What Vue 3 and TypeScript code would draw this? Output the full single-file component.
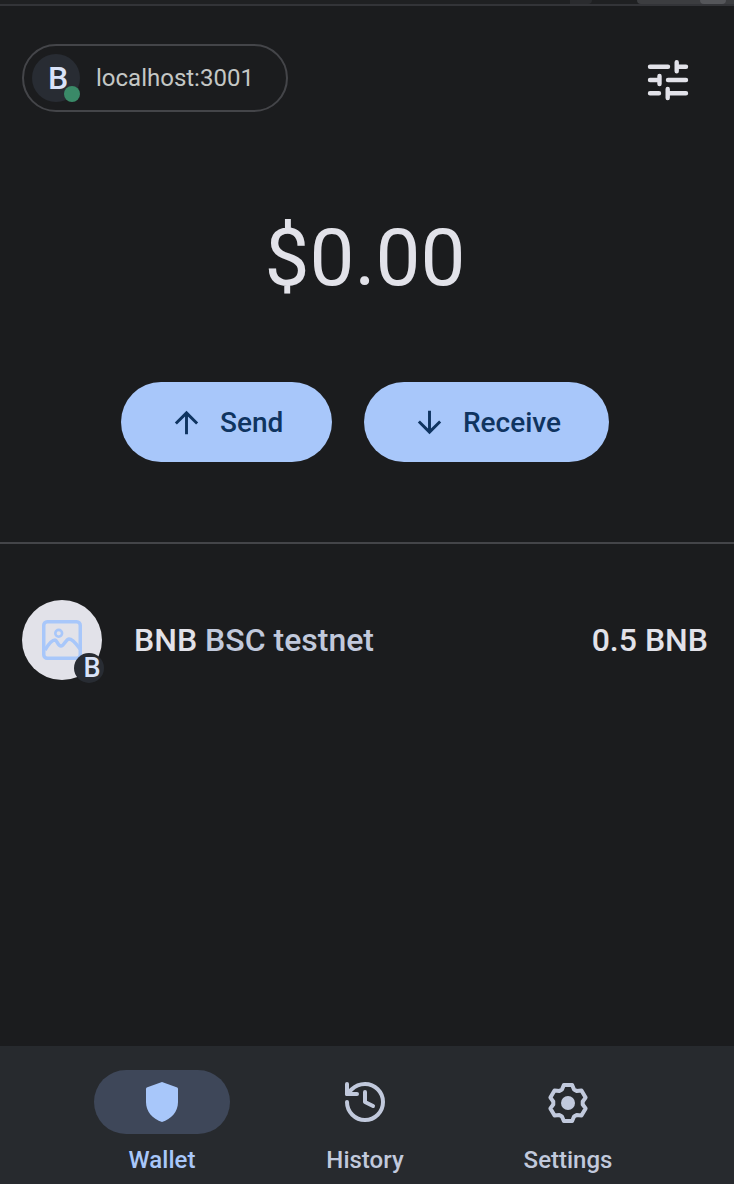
<template>
  <div class="page">
    <div class="top-line">
      <span class="peek peek-a"></span>
      <span class="peek peek-b"></span>
      <span class="peek peek-c"></span>
    </div>

    <header class="header">
      <div class="site-chip">
        <div class="avatar">
          B
          <span class="status-dot"></span>
        </div>
        <span class="site-name">localhost:3001</span>
      </div>
      <svg class="tune" width="48" height="48" viewBox="0 0 48 48" fill="none" stroke="#e2e2e9" stroke-width="4.4" stroke-linecap="round">
        <path d="M6 11.7H24M32.7 7.2V16.2M32.7 11.7H42M6 25H15.5M15.5 21V29M24 25H42M6 38.3H15M23.7 34V43M23.7 38.3H42" />
      </svg>
    </header>

    <div class="balance">$0.00</div>

    <div class="actions">
      <button class="action action-send">
        <svg width="35" height="35" viewBox="0 0 24 24" fill="#0f3460">
          <path d="M4 12l1.41 1.41L11 7.83V20h2V7.83l5.58 5.59L20 12l-8-8-8 8z" />
        </svg>
        Send
      </button>
      <button class="action action-receive">
        <svg width="35" height="35" viewBox="0 0 24 24" fill="#0f3460">
          <path d="M20 12l-1.41-1.41L13 16.17V4h-2v12.17l-5.58-5.59L4 12l8 8 8-8z" />
        </svg>
        Receive
      </button>
    </div>

    <div class="divider"></div>

    <div class="token-row">
      <div class="token-icon">
        <svg width="48" height="48" viewBox="0 0 48 48" fill="none" stroke="#a8c7fa" stroke-width="3.5">
          <rect x="5.75" y="5.75" width="36.5" height="36.5" rx="3.5" />
          <circle cx="20.7" cy="17.3" r="3.4" stroke-width="2.6" />
          <path d="M7 34C10 29 14 24 17 24C19 24 20 30 23 30C26 30 28 23 31 23C35 23 39 29 42 33" stroke-linejoin="round" />
        </svg>
        <span class="token-badge">B</span>
      </div>
      <div class="token-name">BNB <span class="token-network">BSC testnet</span></div>
      <div class="token-amount">0.5 BNB</div>
    </div>

    <div class="spacer"></div>

    <nav class="bottom-nav">
      <div class="nav-item nav-item--active">
        <div class="nav-pill">
          <svg width="48" height="48" viewBox="0 0 24 24" fill="#a8c7fa">
            <path d="M12 2L19.3 4.6C19.8 4.8 20 5.1 20 5.6V12C20 17 16.5 20.5 12 22C7.5 20.5 4 17 4 12V5.6C4 5.1 4.2 4.8 4.7 4.6L12 2Z" />
          </svg>
        </div>
        <span class="nav-label">Wallet</span>
      </div>
      <div class="nav-item">
        <div class="nav-pill">
          <svg width="48" height="48" viewBox="0 0 24 24" fill="none" stroke="#c1c9dc" stroke-width="2" stroke-linecap="round" stroke-linejoin="round">
            <path d="M3 12a9 9 0 1 0 9-9 9.75 9.75 0 0 0-6.74 2.74L3 8" />
            <path d="M3 3v5h5" />
            <path d="M12 7v5l4 2" />
          </svg>
        </div>
        <span class="nav-label">History</span>
      </div>
      <div class="nav-item">
        <div class="nav-pill">
          <svg class="gear" width="48" height="48" viewBox="0 0 24 24" fill="none" stroke="#c1c9dc" stroke-width="2" stroke-linejoin="round">
            <path :d="gearPath" />
            <circle cx="12" cy="12" r="3.5" fill="#c1c9dc" stroke="none" />
          </svg>
        </div>
        <span class="nav-label">Settings</span>
      </div>
    </nav>
  </div>
</template>

<script setup lang="ts">
// six rounded teeth, one pointing straight up
const polar = (deg: number, r: number): string => {
  const rad = (deg * Math.PI) / 180
  return `${(12 + r * Math.cos(rad)).toFixed(2)} ${(12 + r * Math.sin(rad)).toFixed(2)}`
}

const gearPath = [0, 1, 2, 3, 4, 5]
  .map((i) => {
    const a = -90 + i * 60
    return [polar(a - 13, 9.2), polar(a + 13, 9.2), polar(a + 24, 7.4), polar(a + 36, 7.4)].join('L')
  })
  .join('L')
  .replace(/^/, 'M')
  .concat('Z')
</script>

<style>
html,
body {
  margin: 0;
  background: #1b1c1e;
}
</style>

<style scoped>
.page {
  display: flex;
  flex-direction: column;
  height: 1184px;
  overflow: hidden;
  background: #1b1c1e;
  font-family: Roboto, "Liberation Sans", sans-serif;
}

.top-line {
  position: relative;
  height: 4px;
  flex: none;
  border-bottom: 2px solid #333438;
  background: #1f2022;
}

.peek {
  position: absolute;
  top: 0;
  height: 4px;
}

.peek-a {
  left: 570px;
  width: 22px;
  background: #2a2b2e;
  border-radius: 0 0 10px 0;
}

.peek-b {
  left: 637px;
  width: 97px;
  background: #3c3d40;
  border-radius: 0 0 0 10px;
}

.peek-c {
  left: 700px;
  width: 26px;
  background: #55565a;
  border-radius: 0 0 10px 10px;
}

.header {
  display: flex;
  align-items: center;
  justify-content: space-between;
  padding: 38px 42px 0 22px;
}

.site-chip {
  display: flex;
  align-items: center;
  box-sizing: border-box;
  width: 266px;
  height: 68px;
  padding-left: 8px;
  border: 2px solid #444549;
  border-radius: 34px;
}

.avatar {
  position: relative;
  display: flex;
  align-items: center;
  justify-content: center;
  box-sizing: border-box;
  width: 48px;
  height: 48px;
  flex: none;
  padding-left: 4px;
  border-radius: 50%;
  background: #282c33;
  color: #d9e3f8;
  font-size: 32px;
  font-weight: 500;
  line-height: 1;
}

.status-dot {
  position: absolute;
  right: 0;
  bottom: 0;
  width: 16px;
  height: 16px;
  border-radius: 50%;
  background: #3a8a68;
}

.site-name {
  margin-left: 16px;
  color: #c4c7c5;
  font-size: 24px;
  line-height: 32px;
}

.tune {
  display: block;
  position: relative;
  top: 1px;
}

.balance {
  margin-top: 96px;
  padding-right: 4px;
  color: #e2e2e9;
  font-size: 80px;
  line-height: 100px;
  font-weight: 400;
  text-align: center;
}

.actions {
  display: flex;
  justify-content: center;
  gap: 32px;
  margin-top: 74px;
  padding-right: 4px;
}

.action {
  display: flex;
  align-items: center;
  box-sizing: border-box;
  height: 80px;
  border: none;
  border-radius: 40px;
  background: #a8c7fa;
  color: #0f3460;
  font-family: inherit;
  font-size: 28px;
  font-weight: 500;
}

.action svg {
  margin-right: 16px;
}

.action-send {
  width: 211px;
  padding-left: 48px;
}

.action-receive {
  width: 245px;
  padding-left: 48px;
}

.divider {
  height: 2px;
  margin-top: 80px;
  background: #444549;
}

.token-row {
  display: flex;
  align-items: center;
  margin-top: 56px;
  padding: 0 26px 0 22px;
}

.token-icon {
  position: relative;
  display: flex;
  align-items: center;
  justify-content: center;
  width: 80px;
  height: 80px;
  flex: none;
  border-radius: 50%;
  background: #e2e2e9;
}

.token-badge {
  position: absolute;
  right: -2px;
  bottom: -3px;
  display: flex;
  align-items: center;
  justify-content: center;
  box-sizing: border-box;
  width: 30px;
  height: 30px;
  padding-left: 6px;
  border-radius: 50%;
  background: #282c33;
  color: #d9e3f8;
  font-size: 27px;
  font-weight: 500;
  line-height: 1;
}

.token-name {
  margin-left: 32px;
  color: #e2e2e9;
  font-size: 32px;
  font-weight: 500;
}

.token-network {
  color: #c1c9dc;
}

.token-amount {
  margin-left: auto;
  color: #e2e2e9;
  font-size: 32px;
  font-weight: 500;
}

.spacer {
  flex: 1;
}

.bottom-nav {
  display: flex;
  justify-content: center;
  box-sizing: border-box;
  height: 138px;
  padding: 24px 4px 0 0;
  background: #272a2e;
}

.nav-item {
  display: flex;
  flex-direction: column;
  align-items: center;
  width: 136px;
  margin: 0 33.5px;
}

.nav-pill {
  display: flex;
  align-items: center;
  justify-content: center;
  width: 136px;
  height: 64px;
  border-radius: 32px;
}

.nav-item--active .nav-pill {
  background: #3e4759;
}

.nav-label {
  margin-top: 10px;
  color: #c1c9dc;
  font-size: 24px;
  line-height: 32px;
  font-weight: 500;
}

.nav-item--active .nav-label {
  color: #a8c7fa;
}

.gear {
  position: relative;
  top: 1px;
}
</style>
